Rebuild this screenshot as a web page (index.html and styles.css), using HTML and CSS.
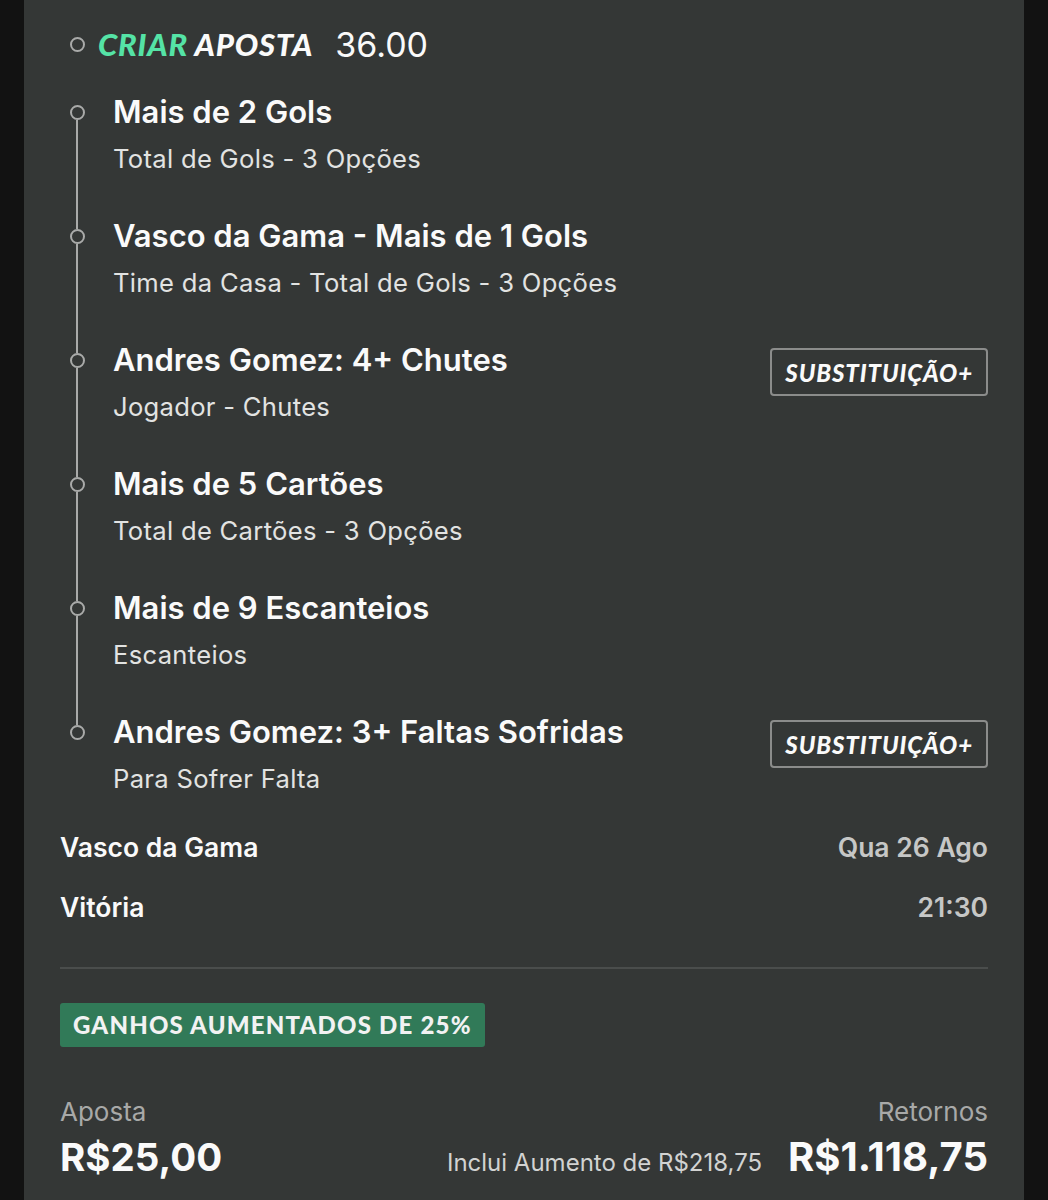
FILE: index.html
```html
<!DOCTYPE html>
<html lang="pt-BR">
<head>
    <meta charset="UTF-8">
    <meta name="viewport" content="width=device-width, initial-scale=1.0">
    <title>Criar Aposta</title>
    <link rel="stylesheet" href="styles.css">
</head>
<body>
    <div class="card">
        <div class="bet-header">
            <div class="marker"><span class="dot"></span></div>
            <div class="brand"><span class="brand-green">CRIAR</span> APOSTA</div>
            <div class="odds">36.00</div>
        </div>

        <div class="legs">
            <div class="leg first">
                <div class="leg-marker"><span class="seg-top"></span><span class="dot"></span><span class="seg-bottom"></span></div>
                <div class="leg-body">
                    <div class="leg-title">Mais de 2 Gols</div>
                    <div class="leg-sub">Total de Gols - 3 Opções</div>
                </div>
            </div>
            <div class="leg">
                <div class="leg-marker"><span class="seg-top"></span><span class="dot"></span><span class="seg-bottom"></span></div>
                <div class="leg-body">
                    <div class="leg-title">Vasco da Gama - Mais de 1 Gols</div>
                    <div class="leg-sub">Time da Casa - Total de Gols - 3 Opções</div>
                </div>
            </div>
            <div class="leg">
                <div class="leg-marker"><span class="seg-top"></span><span class="dot"></span><span class="seg-bottom"></span></div>
                <div class="leg-body">
                    <div class="leg-title">Andres Gomez: 4+ Chutes</div>
                    <div class="leg-sub">Jogador - Chutes</div>
                </div>
                <div class="sub-tag">SUBSTITUIÇÃO+</div>
            </div>
            <div class="leg">
                <div class="leg-marker"><span class="seg-top"></span><span class="dot"></span><span class="seg-bottom"></span></div>
                <div class="leg-body">
                    <div class="leg-title">Mais de 5 Cartões</div>
                    <div class="leg-sub">Total de Cartões - 3 Opções</div>
                </div>
            </div>
            <div class="leg">
                <div class="leg-marker"><span class="seg-top"></span><span class="dot"></span><span class="seg-bottom"></span></div>
                <div class="leg-body">
                    <div class="leg-title">Mais de 9 Escanteios</div>
                    <div class="leg-sub">Escanteios</div>
                </div>
            </div>
            <div class="leg last">
                <div class="leg-marker"><span class="seg-top"></span><span class="dot"></span><span class="seg-bottom"></span></div>
                <div class="leg-body">
                    <div class="leg-title">Andres Gomez: 3+ Faltas Sofridas</div>
                    <div class="leg-sub">Para Sofrer Falta</div>
                </div>
                <div class="sub-tag">SUBSTITUIÇÃO+</div>
            </div>
        </div>

        <div class="match">
            <div class="match-row">
                <span class="team">Vasco da Gama</span>
                <span class="when">Qua 26 Ago</span>
            </div>
            <div class="match-row">
                <span class="team">Vitória</span>
                <span class="when">21:30</span>
            </div>
        </div>

        <div class="divider"></div>

        <div class="boost">GANHOS AUMENTADOS DE 25%</div>

        <div class="totals">
            <div class="stake">
                <div class="label">Aposta</div>
                <div class="amount">R$25,00</div>
            </div>
            <div class="returns">
                <div class="label">Retornos</div>
                <div class="returns-row">
                    <span class="boost-note">Inclui Aumento de R$218,75</span>
                    <span class="amount">R$1.118,75</span>
                </div>
            </div>
        </div>
    </div>
</body>
</html>
```

FILE: styles.css
```css
body {
    margin: 0;
    background-color: #121212;
    font-family: "Inter", "Roboto", sans-serif;
    color: #fafafa;
}

.card {
    width: 1000px;
    margin: 0 24px;
    padding: 0 36px 40px;
    box-sizing: border-box;
    background-color: #343736;
}

/* header */
.bet-header {
    display: flex;
    align-items: center;
    height: 88px;
    margin-bottom: 6px;
}

.marker {
    width: 34px;
    display: flex;
    justify-content: center;
}

.dot {
    display: block;
    width: 15px;
    height: 15px;
    border: 2px solid #a9aaa9;
    border-radius: 50%;
    box-sizing: border-box;
    flex: none;
}

.brand {
    margin-left: 4px;
    font-family: "Lato", sans-serif;
    font-weight: 900;
    font-style: italic;
    font-size: 31px;
    letter-spacing: 0.8px;
}

.brand-green {
    color: #55e3a6;
}

.odds {
    margin-left: 22px;
    font-size: 34px;
    font-weight: 400;
}

/* legs */
.legs {
    display: flex;
    flex-direction: column;
}

.leg {
    display: flex;
    align-items: stretch;
    padding-bottom: 44px;
}

.leg.last {
    padding-bottom: 0;
}

.leg-marker {
    width: 34px;
    display: flex;
    flex-direction: column;
    align-items: center;
    margin-bottom: -44px;
}

.leg.last .leg-marker {
    margin-bottom: 0;
}

.seg-top {
    width: 2px;
    height: 11px;
    background-color: #a9aaa9;
}

.seg-bottom {
    width: 2px;
    flex: 1;
    background-color: #a9aaa9;
}

.leg.first .seg-top,
.leg.last .seg-bottom {
    background-color: transparent;
}

.leg-body {
    flex: 1;
    margin-left: 19px;
}

.leg-title {
    font-size: 31px;
    font-weight: 600;
    line-height: 36px;
}

.leg-sub {
    margin-top: 14px;
    font-size: 25.6px;
    line-height: 30px;
    color: #e2e3e2;
    letter-spacing: 0.3px;
}

.sub-tag {
    align-self: flex-start;
    margin-top: 6px;
    height: 48px;
    padding: 0 13px;
    display: flex;
    align-items: center;
    border: 2px solid #8b8c8b;
    border-radius: 4px;
    box-sizing: border-box;
    font-family: "Lato", sans-serif;
    font-weight: 900;
    font-style: italic;
    font-size: 24px;
    letter-spacing: 0.9px;
}

/* match info */
.match {
    margin-top: 35px;
    display: flex;
    flex-direction: column;
    gap: 24px;
}

.match-row {
    display: flex;
    justify-content: space-between;
    line-height: 36px;
    font-size: 26.5px;
    font-weight: 600;
}

.when {
    color: #c6c7c6;
}

.divider {
    height: 2px;
    margin-top: 42px;
    background-color: #4a4d4c;
}

.boost {
    display: inline-block;
    margin-top: 34px;
    height: 44px;
    line-height: 44px;
    padding: 0 13px;
    border-radius: 3px;
    background-color: #317a58;
    color: #f2f2f2;
    font-family: "Lato", sans-serif;
    font-weight: 900;
    font-size: 24px;
    letter-spacing: 1.2px;
}

/* totals */
.totals {
    margin-top: 49px;
    display: flex;
    justify-content: space-between;
    align-items: flex-end;
}

.label {
    font-size: 26px;
    line-height: 32px;
    color: #a8a9a8;
}

.amount {
    margin-top: 5px;
    font-size: 40px;
    font-weight: 700;
    line-height: 48px;
}

.stake .amount {
    font-size: 38.5px;
}

.returns {
    display: flex;
    flex-direction: column;
    align-items: flex-end;
}

.returns-row {
    display: flex;
    align-items: baseline;
    gap: 26px;
    margin-top: 5px;
}

.returns-row .amount {
    margin-top: 0;
}

.boost-note {
    font-size: 24px;
    color: #d2d3d2;
}
```
